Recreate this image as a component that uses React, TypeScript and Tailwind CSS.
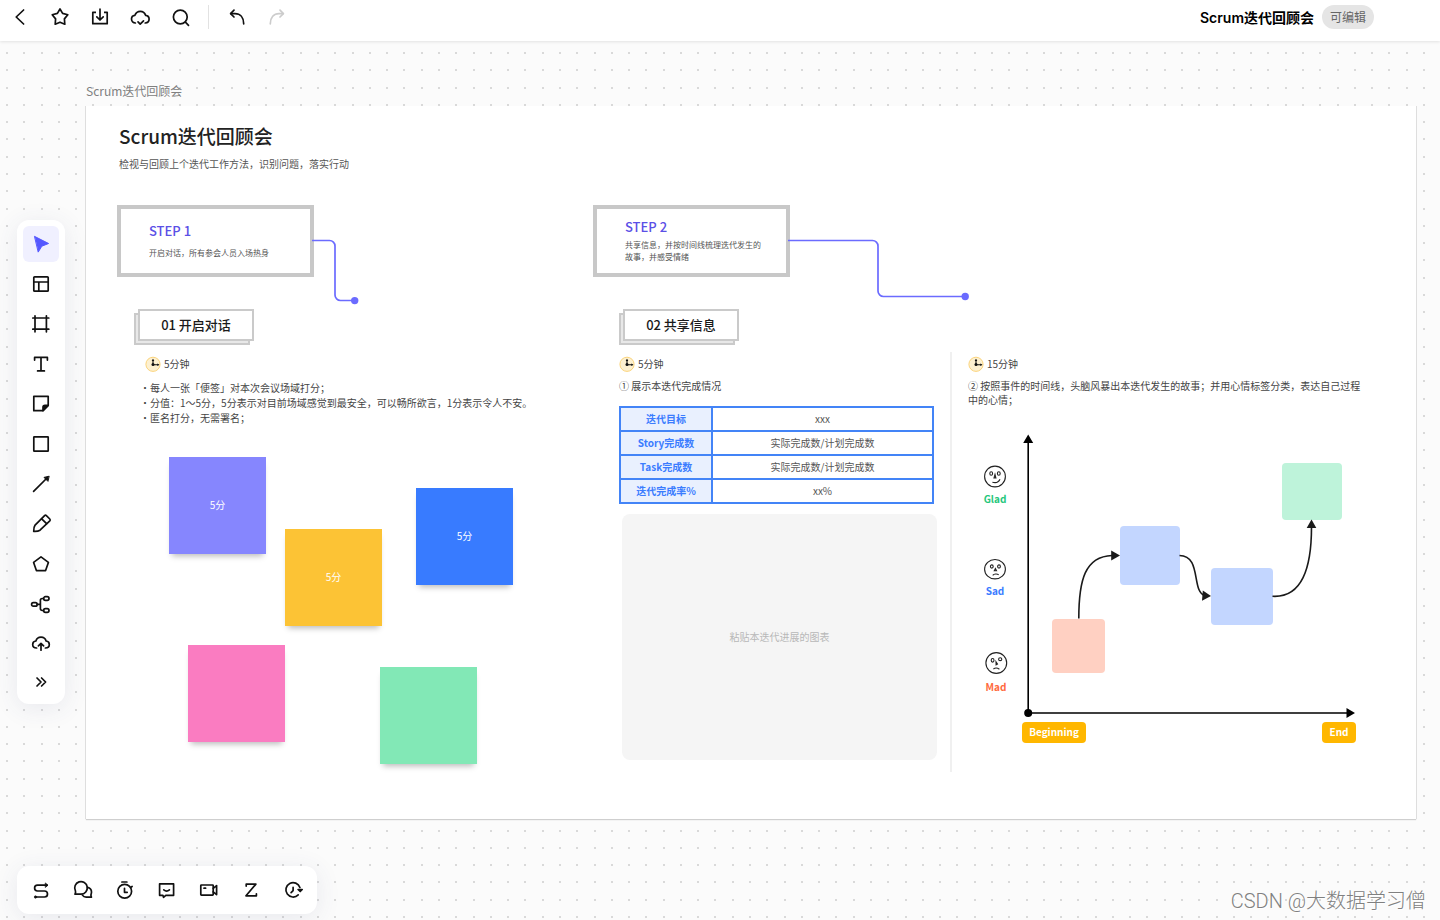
import type { ReactNode } from "react";

const GRID_STEP = 17.28;

function dotGridPath(columns: number, rows: number) {
  let d = "";
  for (let r = 0; r < rows; r++) {
    for (let c = 0; c < columns; c++) {
      d += `M${Math.round(6 + c * GRID_STEP)} ${Math.round(11 + r * GRID_STEP)}h2v2h-2z`;
    }
  }
  return d;
}

const DOTS = dotGridPath(150, 90);

function Icon({ children }: { children: ReactNode }) {
  return (
    <svg
      width="24"
      height="24"
      viewBox="0 0 24 24"
      fill="none"
      stroke="currentColor"
      strokeWidth="1.7"
      strokeLinecap="round"
      strokeLinejoin="round"
      aria-hidden="true"
    >
      {children}
    </svg>
  );
}

const icons = {
  back: <path d="M15.6 5 8.2 12l7.4 7" />,
  star: <path d="M12 4l2.6 4.4 5.2 1.4-3.4 4.1.4 5.3-4.8-2-4.8 2 .4-5.3-3.4-4.1 5.2-1.4z" />,
  download: (
    <>
      <path d="M8 7.3H4.8v11.4h14.4V7.3H16" strokeLinecap="butt" />
      <path d="M12 4.2V15M8.8 11.8 12 15l3.2-3.2" />
    </>
  ),
  cloudCheck: (
    <>
      <path d="M7.4 18C5.2 18 3.5 16.3 3.5 14.1c0-2 1.4-3.6 3.4-3.8C7.8 7.8 9.7 6.3 12.3 6.3s4.500 1.500 5.300 4c2 .2 3.500 1.800 3.500 3.800 0 2.200-1.600 3.900-3.900 3.900" />
      <path d="M10 16.900l2.200 2.300L15.500 15.800" />
    </>
  ),
  search: (
    <>
      <circle cx="12.3" cy="12" r="6.9" />
      <path d="m17.4 17.2 3.1 3.1" />
    </>
  ),
  undo: (
    <>
      <path d="M5.8 8.6H10c5.2 0 8.7 3.8 8.7 10.2" />
      <path d="M9 5.2 5.6 8.6 9 12" />
    </>
  ),
  redo: (
    <>
      <path d="M18.2 8.6H14c-5.2 0-8.7 3.8-8.7 10.2" />
      <path d="m15 5.2 3.4 3.4L15 12" />
    </>
  ),
  cursor: <path d="M5.8 4.5 19.6 11.5l-6.8 2.7L9.4 19.8z" fill="currentColor" strokeWidth="1" />,
  layout: (
    <>
      <rect x="4.8" y="4.8" width="14.4" height="14.4" rx="0.8" />
      <path d="M4.8 10h14.4M9.8 10v9.2" />
    </>
  ),
  frame: <path d="M6 3.8v16M17.4 3.8v16M3.8 6h16M3.8 17.2h16" />,
  text: <path d="M5.6 8.100V5.400h12.800v2.700M12 5.400v13.500M8.600 18.900h6.800" />,
  note: (
    <>
      <path d="M4.8 4.300h14.400V13.500L14 18.700H4.800z" />
      <path d="M19.200 13.400h-3.200a2 2 0 0 0-2 2v3.300z" fill="currentColor" />
    </>
  ),
  square: <rect x="4.8" y="4.8" width="14.4" height="14.4" rx="0.4" />,
  arrow: (
    <>
      <path d="M4.6 19.4 17.5 6.5" />
      <path d="M19.8 4.3 15 5.4l3.7 3.7z" fill="currentColor" strokeWidth="1" />
    </>
  ),
  pencil: (
    <>
      <path d="M4.700 19.400c-.1-2.600.3-4.700 1.400-6.300L15.600 3.600a1.300 1.300 0 0 1 1.800 0L20.800 7a1.300 1.300 0 0 1 0 1.800L11 18.200c-1.700 1.100-3.700 1.400-6.300 1.200z" />
      <path d="m12.700 6.800 4.900 4.900" />
    </>
  ),
  pentagon: <path d="m12 4.9 7.4 5.5-2.8 8.2H7.4l-2.8-8.2z" />,
  mindmap: (
    <>
      <rect x="2.6" y="10.7" width="5.6" height="3.4" rx="1.7" />
      <rect x="14.6" y="4.7" width="5.4" height="3.6" rx="1.8" />
      <rect x="14.6" y="16.7" width="5.4" height="3.6" rx="1.8" />
      <path d="M8.2 12.4h3.2M14.6 6.5h-1.4a1.8 1.8 0 0 0-1.8 1.8v8.4a1.8 1.8 0 0 0 1.8 1.8h1.4" />
    </>
  ),
  cloudUp: (
    <>
      <path d="M7.600 16C5.400 16 3.700 14.700 3.700 12.500c0-1.900 1.300-3.300 3.200-3.500C7.600 6.500 9.400 5.100 12 5.100s4.400 1.400 5.100 3.900c1.900.2 3.200 1.600 3.200 3.500 0 2.200-1.700 3.500-3.900 3.500" />
      <path d="M12 18.200v-6.500M9.400 13.900 12 11.400l2.600 2.500" />
    </>
  ),
  more: <path d="m8 8 4 4-4 4M12.600 8l4 4-4 4" />,
  flow: (
    <>
      <path d="M18 7.200H8.500a2.900 2.900 0 0 0 0 5.800h7a3 3 0 0 1 0 6H6.500" />
      <path d="M16.600 5.200 19 7.200l-2.400 2z" fill="currentColor" strokeWidth="0.8" />
      <circle cx="6.5" cy="19" r="1.2" fill="currentColor" strokeWidth="0.6" />
    </>
  ),
  chat: (
    <>
      <path d="M4 16.200h6a6.300 6.300 0 1 0-5.600-3.400c.3.800.2 2.200-.4 3.400z" />
      <path d="M16.500 9.300c2.400.5 4 2.500 4 4.800 0 1.500-.6 2.300-.6 3l.5 2h-5.300c-1.600 0-2.900-.8-3.700-2" />
    </>
  ),
  timer: (
    <>
      <circle cx="11.700" cy="13.300" r="6.900" />
      <path d="M8.900 4h5M11.500 10.300v4h2.700M17.600 9.400l1.500-.9" />
    </>
  ),
  comment: (
    <>
      <path d="M4.600 5.900h14v11.400h-7.800L8.500 19.300l-.6-2H4.600z" />
      <path d="M8.800 11.900c1.600 1.300 4 1.300 5.600 0" />
    </>
  ),
  video: (
    <>
      <rect x="3.800" y="7" width="12.400" height="10.200" rx="0.6" />
      <path d="m16.200 10.300 3.400-2.700v9L16.200 13.900M7 10.200h1.600" />
    </>
  ),
  letterZ: <path d="M7.200 8.100V6.100h9.700L7 17.800h10.400v-2" />,
  history: (
    <>
      <path d="M18.900 9.500a7.200 7.200 0 1 0-1.700 7.400" />
      <path d="M12.100 9.400v3.200l-2 2" />
      <path d="m17.100 11.500 2.100 2 2-2z" fill="currentColor" />
    </>
  ),
};

type IconName = keyof typeof icons;

const headerTools: { name: IconName; label: string }[] = [
  { name: "back", label: "返回" },
  { name: "star", label: "收藏" },
  { name: "download", label: "下载" },
  { name: "cloudCheck", label: "已保存" },
  { name: "search", label: "搜索" },
];

const sideTools: { name: IconName; label: string }[] = [
  { name: "layout", label: "模板" },
  { name: "frame", label: "画框" },
  { name: "text", label: "文本" },
  { name: "note", label: "便签" },
  { name: "square", label: "矩形" },
  { name: "arrow", label: "连线" },
  { name: "pencil", label: "画笔" },
  { name: "pentagon", label: "图形" },
  { name: "mindmap", label: "思维导图" },
  { name: "cloudUp", label: "上传" },
];

const bottomTools: { name: IconName; label: string }[] = [
  { name: "flow", label: "流程" },
  { name: "chat", label: "聊天" },
  { name: "timer", label: "计时器" },
  { name: "comment", label: "评论" },
  { name: "video", label: "视频" },
  { name: "letterZ", label: "排序" },
  { name: "history", label: "历史" },
];

function Header() {
  return (
    <header className="relative z-10 flex h-[41px] items-start justify-between bg-white pt-[5px] pr-[66px] shadow-[0_1px_3px_rgba(0,0,0,0.1)]">
      <nav className="flex items-center">
        {headerTools.map((t) => (
          <button key={t.name} type="button" aria-label={t.label} className="flex h-6 w-10 items-center justify-center">
            <Icon>{icons[t.name]}</Icon>
          </button>
        ))}
        <span className="mx-2 h-6 w-px bg-[#e2e2e2]" />
        <button type="button" aria-label="撤销" className="flex h-6 w-10 items-center justify-center">
          <Icon>{icons.undo}</Icon>
        </button>
        <button type="button" aria-label="重做" disabled className="flex h-6 w-10 items-center justify-center text-[#cccccc]">
          <Icon>{icons.redo}</Icon>
        </button>
      </nav>
      <div className="flex items-start gap-2">
        <h1 className="font-['Inter','Noto_Sans_CJK_SC',sans-serif] text-sm leading-[26px] font-semibold text-black">Scrum迭代回顾会</h1>
        <span className="rounded-full bg-[#e5e5e5] px-2 text-xs leading-6 text-[#666666]">可编辑</span>
      </div>
    </header>
  );
}

function StepCard({ title, children, className }: { title: string; children: ReactNode; className: string }) {
  return (
    <div className={`absolute top-[99px] flex h-[72px] w-[197px] flex-col justify-center border-4 border-[#c8c8c8] bg-white pb-[2px] pl-7 ${className}`}>
      <h3 className="text-[13px] leading-5 font-medium text-[#5b50e6]">{title}</h3>
      <p className="text-[8px] leading-3 text-[#555555]">{children}</p>
    </div>
  );
}

function Chip({ children, className }: { children: ReactNode; className: string }) {
  return (
    <div className={`absolute top-[207px] h-[32px] w-[116px] border-2 border-[#cacaca] bg-[#e8e8e8] ${className}`}>
      <h3 className="absolute -top-[6px] left-[2px] flex h-[32px] w-[116px] items-center justify-center border-2 border-[#cacaca] bg-white text-[13px] leading-5 font-medium text-[#1a1a1a]">
        {children}
      </h3>
    </div>
  );
}

function Duration({ children, className }: { children: ReactNode; className: string }) {
  return (
    <div className={`absolute top-[250px] flex items-center gap-[3px] text-[10px] leading-4 text-[#444444] ${className}`}>
      <svg width="16" height="16" viewBox="0 0 16 16" aria-hidden="true">
        <circle cx="8" cy="8.3" r="7.1" fill="#fdf0d0" stroke="#fbd47c" strokeWidth="1" />
        <path d="M8 3.8V8.8H13.5" fill="none" stroke="#111" strokeWidth="1.1" />
        <path d="m8 2.8 1.3 2.2H6.7zM14.5 8.8l-2.2-1.3v2.6z" fill="#111" />
        <circle cx="8" cy="8.6" r="1.5" fill="#111" />
      </svg>
      <span>{children}</span>
    </div>
  );
}

const guidelines = [
  "每人一张「便签」对本次会议场域打分；",
  "分值：1～5分，5分表示对目前场域感觉到最安全，可以畅所欲言，1分表示令人不安。",
  "匿名打分，无需署名；",
];

const stickies = [
  { place: "left-[83px] top-[351px] bg-[#8686fe]", text: "5分" },
  { place: "left-[199px] top-[423px] bg-[#fcc335]", text: "5分" },
  { place: "left-[330px] top-[382px] bg-[#387bff]", text: "5分" },
  { place: "left-[102px] top-[539px] bg-[#fa7cc1]", text: "" },
  { place: "left-[294px] top-[561px] bg-[#82e8b6]", text: "" },
];

const metrics = [
  ["迭代目标", "xxx"],
  ["Story完成数", "实际完成数/计划完成数"],
  ["Task完成数", "实际完成数/计划完成数"],
  ["迭代完成率%", "xx%"],
];

const storyCards = [
  "left-[1034px] top-[420px] h-[59px] w-[60px] bg-[#c3d6ff]",
  "left-[1125px] top-[462px] h-[57px] w-[62px] bg-[#c3d6ff]",
  "left-[1196px] top-[357px] h-[57px] w-[60px] bg-[#bef3da]",
  "left-[966px] top-[513px] h-[54px] w-[53px] bg-[#ffd0c2]",
];

const moods = [
  {
    label: "Glad",
    place: "left-[889px] top-[359px] gap-[2px] text-[#26c77c]",
    face: (
      <>
        <circle cx="12" cy="11.5" r="10.4" />
        <ellipse cx="8.2" cy="8.5" rx="1.4" ry="1.8" />
        <ellipse cx="15.8" cy="8.5" rx="1.4" ry="1.8" />
        <path d="m12 9.3-1 3.6h1.9z" />
        <path d="M9.4 17.2c3 .9 6.2 0 7.6-3" />
      </>
    ),
  },
  {
    label: "Sad",
    place: "left-[889px] top-[451px] gap-[2px] text-[#3b7cff]",
    face: (
      <>
        <ellipse cx="12" cy="12.2" rx="10.4" ry="9.7" />
        <ellipse cx="8.8" cy="9.5" rx="1.4" ry="1.6" />
        <ellipse cx="16" cy="9.5" rx="1.4" ry="1.6" />
        <path d="m12.4 11.6-1.1 2.2h2.2z" />
        <path d="M9.7 18.4c1.4-1.7 4.4-1.7 6-.7" />
      </>
    ),
  },
  {
    label: "Mad",
    place: "left-[890px] top-[545px] gap-[4px] text-[#ff6a3d]",
    face: (
      <>
        <circle cx="12.3" cy="12" r="10.4" />
        <ellipse cx="8.6" cy="9.3" rx="1.4" ry="1.8" />
        <ellipse cx="16.2" cy="8.2" rx="1.6" ry="1.4" />
        <path d="m12 10.8 1.5 2.3-1.4.7z" />
        <path d="M9.4 18c1.6-1.2 4-1.2 6 .2" />
      </>
    ),
  },
];

function Connectors() {
  return (
    <svg className="pointer-events-none absolute inset-0" width="1330" height="713" viewBox="86 106 1330 713" fill="none" aria-hidden="true">
      <g stroke="#6b6bff" strokeWidth="1.7">
        <path d="M312 240.5H329.5a5.5 5.5 0 0 1 5.5 5.5v49a5.5 5.5 0 0 0 5.5 5.5H355" />
        <path d="M788 240.5H872.5a5.5 5.5 0 0 1 5.5 5.5v45a5.5 5.5 0 0 0 5.5 5.5H965" />
      </g>
      <circle cx="354.7" cy="300.6" r="3.7" fill="#6b6bff" />
      <circle cx="965.2" cy="296.5" r="3.7" fill="#6b6bff" />
      <path d="M1028.2 441V713H1347" stroke="#000" strokeWidth="1.6" />
      <path d="m1028.2 434.5 5 8.5h-10zM1355 713l-8.5-5v10z" fill="#000" />
      <circle cx="1028.2" cy="713" r="4" fill="#000" />
      <g stroke="#1a1a1a" strokeWidth="1.6">
        <path d="M1078.8 618.5C1078.8 580 1085 556.5 1112 555.5" />
        <path d="M1179.5 555.5C1202 555.5 1191 592 1205 595.5" />
        <path d="M1272.5 596.3C1302 598 1311.5 568 1311.5 527" />
      </g>
      <g fill="#1a1a1a">
        <path d="m1120 555.4-8.8-5v10z" />
        <path d="m1211 596-8.2-5.6-.8 10.4z" />
        <path d="m1311.5 519.5-4.8 8.5h9.6z" />
      </g>
    </svg>
  );
}

function Board() {
  return (
    <section className="absolute top-[65px] left-[86px] h-[713px] w-[1330px] bg-white shadow-[1px_0_0_#dedede,-1px_0_0_#dedede,0_1px_1px_#cfcfcf]">
      <div className="absolute top-[16px] left-[33px]">
        <h2 className="text-[19px] leading-7 font-medium text-[#222222]">Scrum迭代回顾会</h2>
        <p className="mt-[6px] text-[10px] leading-4 text-[#555555]">检视与回顾上个迭代工作方法，识别问题，落实行动</p>
      </div>

      <StepCard title="STEP 1" className="left-[31px] gap-[6px]">
        开启对话，所有参会人员入场热身
      </StepCard>
      <StepCard title="STEP 2" className="left-[507px] gap-[2px]">
        共享信息，并按时间线梳理迭代发生的
        <br />
        故事，并感受情绪
      </StepCard>

      <Chip className="left-[48px]">01 开启对话</Chip>
      <Chip className="left-[533px]">02 共享信息</Chip>

      <Duration className="left-[59px]">5分钟</Duration>
      <Duration className="left-[533px]">5分钟</Duration>
      <Duration className="left-[882px]">15分钟</Duration>

      <ul className="absolute top-[274px] left-[54px] text-[10px] leading-[15px] whitespace-nowrap text-[#444444]">
        {guidelines.map((line) => (
          <li key={line} className="flex">
            <span className="w-[10px] text-center">·</span>
            {line}
          </li>
        ))}
      </ul>

      {stickies.map((s) => (
        <div
          key={s.place}
          className={`absolute flex h-[97px] w-[97px] items-center justify-center pb-[3px] text-[10px] text-white shadow-[0_5px_6px_-3px_rgba(0,0,0,0.28)] ${s.place}`}
        >
          {s.text}
        </div>
      ))}

      <p className="absolute top-[272px] left-[533px] text-[10px] leading-4 text-[#444444]">① 展示本迭代完成情况</p>

      <table className="absolute top-[300px] left-[533px] w-[315px] table-fixed border-collapse text-center text-[10px] leading-4">
        <tbody>
          {metrics.map(([name, value]) => (
            <tr key={name} className="h-[24px]">
              <th scope="row" className="w-[92px] border-2 border-[#4384f7] bg-[#e9f0fe] p-0 font-bold text-[#3b7cff]">
                {name}
              </th>
              <td className="border-2 border-[#4384f7] p-0 text-[#555555]">{value}</td>
            </tr>
          ))}
        </tbody>
      </table>

      <div className="absolute top-[408px] left-[536px] flex h-[246px] w-[315px] items-center justify-center rounded-lg bg-[#f5f5f5] pb-[2px] text-[10px] text-[#b8b8b8]">
        粘贴本迭代进展的图表
      </div>

      <div className="absolute top-[246px] left-[864px] h-[420px] w-[2px] bg-[#f0f0f0]" />

      <p className="absolute top-[273px] left-[882px] text-[10px] leading-[14px] whitespace-nowrap text-[#444444]">
        ② 按照事件的时间线，头脑风暴出本迭代发生的故事；并用心情标签分类，表达自己过程
        <br />
        中的心情；
      </p>

      {moods.map((m) => (
        <div key={m.label} className={`absolute flex w-[40px] flex-col items-center text-[10px] leading-4 font-bold ${m.place}`}>
          <svg width="24" height="24" viewBox="0 0 24 24" fill="none" stroke="#222" strokeWidth="1.1" aria-hidden="true">
            {m.face}
          </svg>
          {m.label}
        </div>
      ))}

      {storyCards.map((place) => (
        <div key={place} className={`absolute rounded ${place}`} />
      ))}

      <span className="absolute top-[616px] left-[936px] flex h-[21px] w-[64px] items-center justify-center rounded bg-[#ffb700] pb-[2px] text-[10px] font-bold text-white">
        Beginning
      </span>
      <span className="absolute top-[616px] left-[1236px] flex h-[21px] w-[34px] items-center justify-center rounded bg-[#ffb700] pb-[2px] text-[10px] font-bold text-white">
        End
      </span>

      <Connectors />
    </section>
  );
}

export default function App() {
  return (
    <div className="flex h-screen min-h-[880px] flex-col overflow-hidden font-['Noto_Sans_CJK_SC',sans-serif] text-[#111111]">
      <Header />
      <main className="relative flex-1 overflow-hidden bg-[#fbfbfb]">
        <svg className="absolute inset-0 h-full w-full" aria-hidden="true">
          <path d={DOTS} fill="#d9d9d9" />
        </svg>

        <p className="absolute top-[41px] left-[86px] text-xs leading-[18px] text-[#808080]">Scrum迭代回顾会</p>
        <Board />

        <aside className="absolute top-[179px] left-[17px] flex flex-col gap-1 rounded-xl bg-white p-[6px] shadow-[0_4px_24px_rgba(60,70,120,0.1)]">
          <button type="button" aria-label="选择" className="flex h-9 w-9 items-center justify-center rounded-md bg-[#f0f0ff] text-[#5558ff]">
            <Icon>{icons.cursor}</Icon>
          </button>
          {sideTools.map((t) => (
            <button key={t.name} type="button" aria-label={t.label} className="flex h-9 w-9 items-center justify-center">
              <Icon>{icons[t.name]}</Icon>
            </button>
          ))}
          <button type="button" aria-label="更多" className="flex h-8 w-9 items-center justify-center">
            <Icon>{icons.more}</Icon>
          </button>
        </aside>

        <div className="absolute bottom-[6px] left-[17px] flex gap-[6px] rounded-xl bg-white p-[6px] shadow-[0_4px_24px_rgba(60,70,120,0.1)]">
          {bottomTools.map((t) => (
            <button key={t.name} type="button" aria-label={t.label} className="flex h-9 w-9 items-center justify-center">
              <Icon>{icons[t.name]}</Icon>
            </button>
          ))}
        </div>

        <p className="absolute right-[14px] bottom-[4px] font-['Roboto','Noto_Sans_CJK_SC',sans-serif] text-xl leading-[30px] font-light text-[#808080] [text-shadow:1px_1px_0_#ffffff]">
          CSDN @大数据学习僧
        </p>
      </main>
    </div>
  );
}
